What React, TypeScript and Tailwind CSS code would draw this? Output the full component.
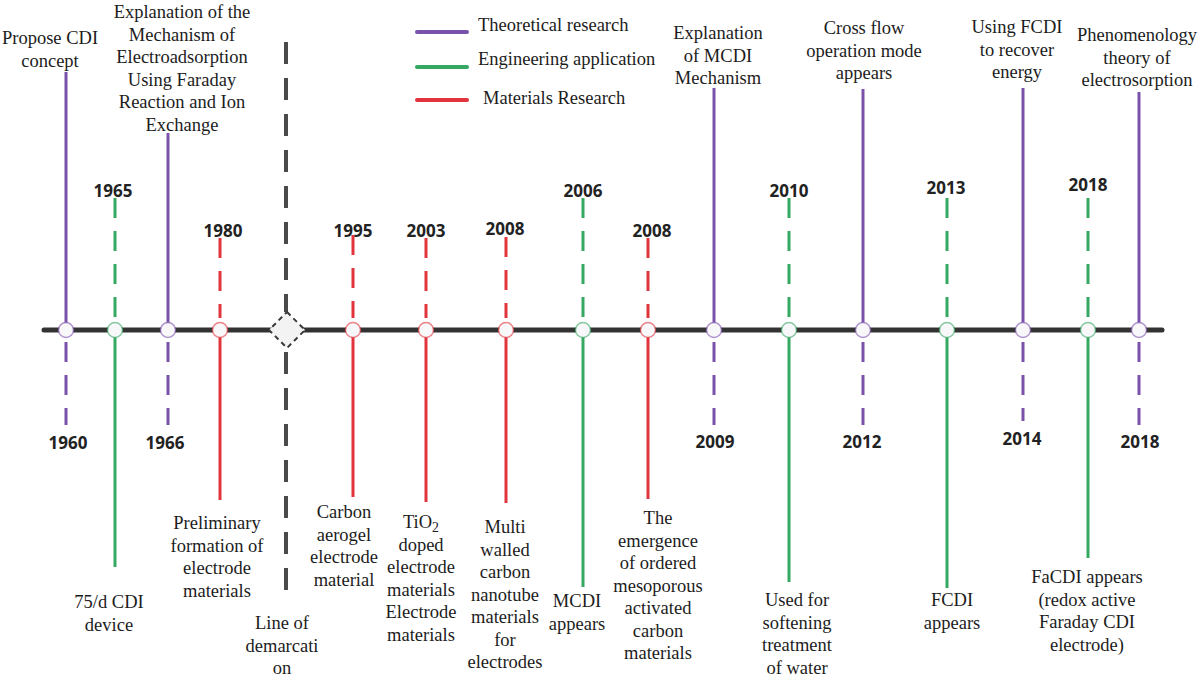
import React from "react";

type Kind = "theory" | "engineering" | "materials";

const colors: Record<Kind, string> = {
  theory: "#7b52ab",
  engineering: "#35a862",
  materials: "#e1343c",
};

const AXIS_Y = 330;

type Event = {
  x: number;
  kind: Kind;
  // solid line runs to the label, dashed line runs to the year
  up: boolean; // true = solid part above axis
  solidEnd: number;
  dashEnd: number;
};

const events: Event[] = [
  { x: 66, kind: "theory", up: true, solidEnd: 72, dashEnd: 425 },
  { x: 115, kind: "engineering", up: false, solidEnd: 567, dashEnd: 198 },
  { x: 168, kind: "theory", up: true, solidEnd: 133, dashEnd: 425 },
  { x: 220, kind: "materials", up: false, solidEnd: 500, dashEnd: 238 },
  { x: 353, kind: "materials", up: false, solidEnd: 497, dashEnd: 235 },
  { x: 426, kind: "materials", up: false, solidEnd: 502, dashEnd: 238 },
  { x: 506, kind: "materials", up: false, solidEnd: 503, dashEnd: 237 },
  { x: 583, kind: "engineering", up: false, solidEnd: 587, dashEnd: 198 },
  { x: 648, kind: "materials", up: false, solidEnd: 499, dashEnd: 238 },
  { x: 714, kind: "theory", up: true, solidEnd: 88, dashEnd: 425 },
  { x: 789, kind: "engineering", up: false, solidEnd: 582, dashEnd: 198 },
  { x: 863, kind: "theory", up: true, solidEnd: 89, dashEnd: 425 },
  { x: 947, kind: "engineering", up: false, solidEnd: 588, dashEnd: 198 },
  { x: 1023, kind: "theory", up: true, solidEnd: 88, dashEnd: 421 },
  { x: 1088, kind: "engineering", up: false, solidEnd: 558, dashEnd: 198 },
  { x: 1139, kind: "theory", up: true, solidEnd: 92, dashEnd: 425 },
];

type Label = { x: number; y: number; lines: React.ReactNode[] };

const labels: Label[] = [
  { x: 50, y: 27, lines: ["Propose CDI", "concept"] },
  {
    x: 182,
    y: 1,
    lines: [
      "Explanation of the",
      "Mechanism of",
      "Electroadsorption",
      "Using Faraday",
      "Reaction and Ion",
      "Exchange",
    ],
  },
  { x: 718, y: 22, lines: ["Explanation", "of MCDI", "Mechanism"] },
  { x: 864, y: 17, lines: ["Cross flow", "operation mode", "appears"] },
  { x: 1017, y: 16, lines: ["Using FCDI", "to recover", "energy"] },
  { x: 1137, y: 24, lines: ["Phenomenology", "theory of", "electrosorption"] },
  { x: 109, y: 591, lines: ["75/d CDI", "device"] },
  { x: 217, y: 512, lines: ["Preliminary", "formation of", "electrode", "materials"] },
  { x: 282, y: 612, lines: ["Line of", "demarcati", "on"] },
  { x: 344, y: 501, lines: ["Carbon", "aerogel", "electrode", "material"] },
  {
    x: 421,
    y: 511,
    lines: [
      <>
        TiO<span className="relative top-[0.3em] text-[0.75em] leading-none">2</span>
      </>,
      "doped",
      "electrode",
      "materials",
      "Electrode",
      "materials",
    ],
  },
  {
    x: 505,
    y: 516,
    lines: ["Multi", "walled", "carbon", "nanotube", "materials", "for", "electrodes"],
  },
  { x: 577, y: 590, lines: ["MCDI", "appears"] },
  {
    x: 658,
    y: 507,
    lines: ["The", "emergence", "of ordered", "mesoporous", "activated", "carbon", "materials"],
  },
  { x: 797, y: 589, lines: ["Used for", "softening", "treatment", "of water"] },
  { x: 952, y: 589, lines: ["FCDI", "appears"] },
  {
    x: 1087,
    y: 566,
    lines: ["FaCDI appears", "(redox active", "Faraday CDI", "electrode)"],
  },
];

const years = [
  { x: 68, y: 442, t: "1960" },
  { x: 113, y: 190, t: "1965" },
  { x: 165, y: 442, t: "1966" },
  { x: 223, y: 230, t: "1980" },
  { x: 353, y: 230, t: "1995" },
  { x: 426, y: 230, t: "2003" },
  { x: 505, y: 228, t: "2008" },
  { x: 583, y: 190, t: "2006" },
  { x: 652, y: 230, t: "2008" },
  { x: 789, y: 190, t: "2010" },
  { x: 946, y: 187, t: "2013" },
  { x: 1088, y: 184, t: "2018" },
  { x: 715, y: 441, t: "2009" },
  { x: 862, y: 441, t: "2012" },
  { x: 1022, y: 438, t: "2014" },
  { x: 1140, y: 441, t: "2018" },
];

const legend = [
  { y: 32, kind: "theory" as Kind, text: "Theoretical research", textX: 478, textY: 25 },
  { y: 67, kind: "engineering" as Kind, text: "Engineering application", textX: 478, textY: 59 },
  { y: 100, kind: "materials" as Kind, text: "Materials Research", textX: 483, textY: 98 },
];

function TimelineLines() {
  return (
    <svg className="absolute inset-0" width={1200} height={677} viewBox="0 0 1200 677">
      {/* legend swatches */}
      {legend.map((l) => (
        <line key={l.text} x1={417} x2={467} y1={l.y} y2={l.y} stroke={colors[l.kind]} strokeWidth={4} strokeLinecap="round" />
      ))}

      {/* event stems */}
      {events.map((e) => {
        const c = colors[e.kind];
        return (
          <g key={e.x}>
            <line x1={e.x} x2={e.x} y1={e.solidEnd} y2={AXIS_Y} stroke={c} strokeWidth={3} />
            <line
              x1={e.x}
              x2={e.x}
              y1={e.up ? AXIS_Y + 12 : e.dashEnd}
              y2={e.up ? e.dashEnd : AXIS_Y - 12}
              stroke={c}
              strokeWidth={3}
              strokeDasharray="20 13"
            />
          </g>
        );
      })}

      {/* line of demarcation */}
      <line x1={286} x2={286} y1={42} y2={312} stroke="#4a4a4a" strokeWidth={4} strokeDasharray="22 14" />
      <line x1={286} x2={286} y1={352} y2={600} stroke="#4a4a4a" strokeWidth={4} strokeDasharray="22 14" />

      {/* axis */}
      <line x1={44} x2={1162} y1={AXIS_Y} y2={AXIS_Y} stroke="#333333" strokeWidth={5} strokeLinecap="round" />

      {/* demarcation diamond */}
      <polygon
        points="287,312 305,330 287,348 269,330"
        fill="#f3f3f3"
        stroke="#3a3a3a"
        strokeWidth={2}
        strokeDasharray="5 4"
      />

      {/* nodes */}
      {events.map((e) => (
        <circle
          key={`n${e.x}`}
          cx={e.x}
          cy={AXIS_Y}
          r={7.5}
          fill="#f8f7f9"
          stroke={colors[e.kind]}
          strokeOpacity={0.6}
          strokeWidth={1.5}
        />
      ))}
    </svg>
  );
}

export default function App() {
  return (
    <div className="relative h-[677px] w-[1200px] overflow-hidden bg-white text-[#1c1c1c]">
      <TimelineLines />

      {legend.map((l) => (
        <div
          key={l.text}
          className="absolute -translate-y-1/2 whitespace-nowrap font-['Liberation_Serif',serif] text-[18.5px] leading-[22.5px]"
          style={{ left: l.textX, top: l.textY }}
        >
          {l.text}
        </div>
      ))}

      {labels.map((l, i) => (
        <div
          key={i}
          className="absolute -translate-x-1/2 whitespace-nowrap text-center font-['Liberation_Serif',serif] text-[18.5px] leading-[22.5px]"
          style={{ left: l.x, top: l.y }}
        >
          {l.lines.map((line, j) => (
            <div key={j} className="h-[22.5px]">
              {line}
            </div>
          ))}
        </div>
      ))}

      {years.map((y, i) => (
        <div
          key={i}
          className="absolute -translate-x-1/2 -translate-y-1/2 font-['Open_Sans',sans-serif] text-[17px] font-bold leading-none text-[#222]"
          style={{ left: y.x, top: y.y }}
        >
          {y.t}
        </div>
      ))}
    </div>
  );
}
